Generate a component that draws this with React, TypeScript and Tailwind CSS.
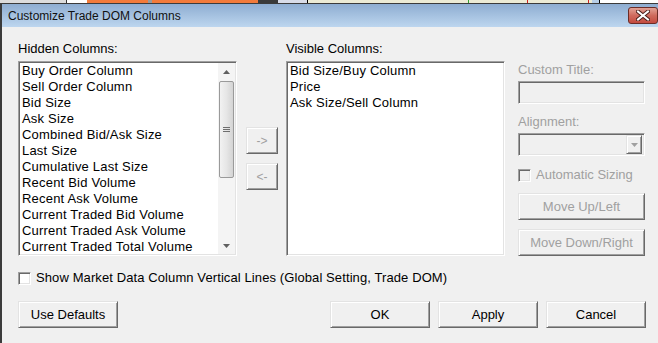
import React from 'react';

const hiddenColumns = [
  'Buy Order Column',
  'Sell Order Column',
  'Bid Size',
  'Ask Size',
  'Combined Bid/Ask Size',
  'Last Size',
  'Cumulative Last Size',
  'Recent Bid Volume',
  'Recent Ask Volume',
  'Current Traded Bid Volume',
  'Current Traded Ask Volume',
  'Current Traded Total Volume',
];

const visibleColumns = ['Bid Size/Buy Column', 'Price', 'Ask Size/Sell Column'];

// classic 3D edges
const raised =
  'bg-[#f0f0f0] border border-t-[#e3e3e3] border-l-[#e3e3e3] border-b-[#696969] border-r-[#696969] shadow-[inset_1px_1px_0_#fff,inset_-1px_-1px_0_#a0a0a0]';
const sunken =
  'border border-t-[#a0a0a0] border-l-[#a0a0a0] border-b-white border-r-white shadow-[inset_1px_1px_0_#696969,inset_-1px_-1px_0_#e3e3e3]';

const Button = ({ label, disabled, className = '' }: { label: string; disabled?: boolean; className?: string }) => (
  <button
    className={`${raised} h-[27px] text-[13px] leading-none flex items-center justify-center ${
      disabled ? 'text-[#a0a0a0]' : 'text-black'
    } ${className}`}
  >
    {label}
  </button>
);

const Checkbox = ({ disabled }: { disabled?: boolean }) => (
  <span className={`${sunken} w-[13px] h-[13px] shrink-0 ${disabled ? 'bg-[#f0f0f0]' : 'bg-white'}`} />
);

const Triangle = ({ up, color = '#000' }: { up?: boolean; color?: string }) => (
  <svg width="7" height="4" viewBox="0 0 7 4">
    <path d={up ? 'M0 4 L3.5 0 L7 4 Z' : 'M0 0 L7 0 L3.5 4 Z'} fill={color} />
  </svg>
);

const TopStrip = () => (
  <div className="flex h-[3px] w-full">
    <div className="w-[66px] bg-[#dcdcdc]" />
    <div className="w-[1px] bg-[#333]" />
    <div className="w-[20px] bg-white" />
    <div className="w-[61px] bg-[#f27a3a]" />
    <div className="w-[4px] bg-[#9a9a9a]" />
    <div className="w-[106px] bg-[#f27a3a]" />
    <div className="w-[20px] bg-[#3a3a3a]" />
    <div className="w-[29px] bg-[#d8dce8]" />
    <div className="w-[1px] bg-black" />
    <div className="w-[160px] bg-[#ecebd5]" />
    <div className="w-[1px] bg-[#2fa02f]" />
    <div className="w-[58px] bg-[#ecebd5]" />
    <div className="w-[1px] bg-[#d02020]" />
    <div className="w-[60px] bg-[#ecebd5]" />
    <div className="w-[1px] bg-[#d02020]" />
    <div className="w-[3px] bg-[#ecebd5]" />
    <div className="w-[7px] bg-[#b8cfe8]" />
    <div className="w-[1px] bg-black" />
    <div className="flex-1 bg-white" />
  </div>
);

export default function App() {
  return (
    <div className="w-[658px] h-[343px] overflow-hidden bg-[#f0f0f0] font-['Liberation_Sans',Arial,sans-serif] text-[13px] text-black flex flex-col">
      <TopStrip />
      <div className="flex-1 flex flex-col border-l-2 border-t border-[#3b3b3b]">
        {/* Title bar */}
        <div className="h-[23px] flex items-center justify-between bg-gradient-to-b from-[#8eadd1] to-[#bdd6ef]">
          <span className="pl-[6px] text-[12px] text-[#111]">Customize Trade DOM Columns</span>
          <div className="w-[30px] h-[17px] rounded-[3px] border border-[#6b2c27] bg-gradient-to-b from-[#e1a195] via-[#cf6a5d] to-[#c34a3f] flex items-center justify-center">
            <svg width="14" height="11" viewBox="0 0 14 11">
              <path d="M2 1.5 L12 9.5 M12 1.5 L2 9.5" stroke="#4a1e1a" strokeWidth="4" strokeLinecap="square" />
              <path d="M2 1.5 L12 9.5 M12 1.5 L2 9.5" stroke="#fff" strokeWidth="2" strokeLinecap="square" />
            </svg>
          </div>
        </div>

        {/* Body */}
        <div className="flex-1 pl-[16px] pt-[14px]">
          <div className="flex items-start">
            {/* Hidden columns */}
            <div className="w-[219px] flex flex-col">
              <div className="h-[16px] leading-[16px]">Hidden Columns:</div>
              <div className={`${sunken} mt-[4px] h-[195px] bg-white flex`}>
                <div className="flex-1 pl-[3px] pt-[1px] overflow-hidden">
                  {hiddenColumns.map((c) => (
                    <div key={c} className="h-[16px] leading-[16px] whitespace-nowrap tracking-[0.2px]">
                      {c}
                    </div>
                  ))}
                </div>
                {/* Scrollbar */}
                <div className="w-[17px] mr-[1px] my-[1px] bg-[#f4f4f4] flex flex-col">
                  <div className="h-[17px] flex items-center justify-center">
                    <Triangle up color="#606060" />
                  </div>
                  <div className="flex-1">
                    <div className="mt-[1px] mx-[1px] h-[97px] rounded-[2px] border border-[#9a9a9a] bg-gradient-to-r from-[#f2f2f2] via-[#e6e6e6] to-[#d4d4d4] flex flex-col items-center justify-center gap-[1px]">
                      <div className="w-[7px] h-[1px] bg-[#6e6e6e]" />
                      <div className="w-[7px] h-[1px] bg-[#6e6e6e]" />
                      <div className="w-[7px] h-[1px] bg-[#6e6e6e]" />
                    </div>
                  </div>
                  <div className="h-[17px] flex items-center justify-center">
                    <Triangle color="#606060" />
                  </div>
                </div>
              </div>
            </div>

            {/* Move buttons */}
            <div className="ml-[9px] mt-[86px] w-[32px] flex flex-col gap-[9px]">
              <Button label="->" disabled className="!text-[12px]" />
              <Button label="<-" disabled className="!text-[12px]" />
            </div>

            {/* Visible columns */}
            <div className="ml-[8px] w-[219px] flex flex-col">
              <div className="h-[16px] leading-[16px]">Visible Columns:</div>
              <div className={`${sunken} mt-[4px] h-[195px] bg-white pl-[3px] pt-[1px]`}>
                {visibleColumns.map((c) => (
                  <div key={c} className="h-[16px] leading-[16px] whitespace-nowrap tracking-[0.2px]">
                    {c}
                  </div>
                ))}
              </div>
            </div>

            {/* Column properties */}
            <div className="ml-[13px] w-[127px] pt-[21px] flex flex-col text-[#a0a0a0]">
              <div className="h-[16px] leading-[16px]">Custom Title:</div>
              <div className={`${sunken} mt-[3px] h-[23px] bg-[#f0f0f0]`} />
              <div className="mt-[10px] h-[16px] leading-[16px]">Alignment:</div>
              <div className={`${sunken} mt-[3px] h-[23px] bg-[#f0f0f0] flex justify-end items-center pr-[2px]`}>
                <div className={`${raised} w-[16px] h-[19px] flex items-center justify-center`}>
                  <Triangle color="#a0a0a0" />
                </div>
              </div>
              <div className="mt-[11px] h-[16px] flex items-center gap-[5px]">
                <Checkbox disabled />
                <span className="leading-[16px]">Automatic Sizing</span>
              </div>
              <Button label="Move Up/Left" disabled className="mt-[10px] w-full" />
              <Button label="Move Down/Right" disabled className="mt-[9px] w-full" />
            </div>
          </div>

          {/* Global setting */}
          <div className="mt-[14px] h-[16px] flex items-center gap-[5px]">
            <Checkbox />
            <span className="leading-[16px] tracking-[0.1px]">Show Market Data Column Vertical Lines (Global Setting, Trade DOM)</span>
          </div>

          {/* Footer buttons */}
          <div className="mt-[15px] w-[628px] flex justify-between">
            <Button label="Use Defaults" className="w-[100px]" />
            <div className="flex gap-[8px]">
              <Button label="OK" className="w-[100px]" />
              <Button label="Apply" className="w-[100px]" />
              <Button label="Cancel" className="w-[100px]" />
            </div>
          </div>
        </div>
      </div>
    </div>
  );
}
